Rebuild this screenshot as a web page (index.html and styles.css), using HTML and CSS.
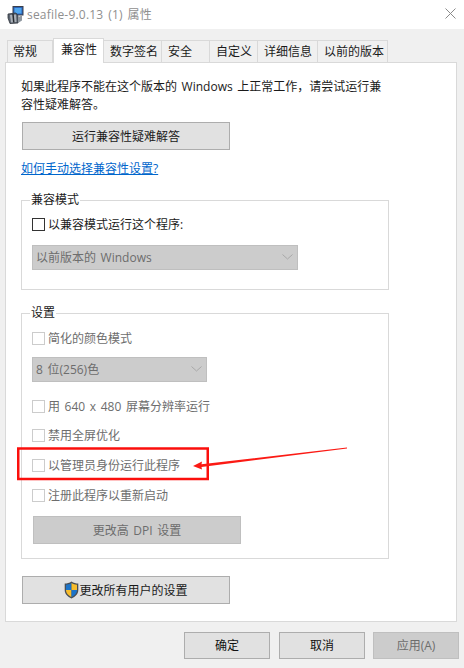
FILE: index.html
```html
<!DOCTYPE html>
<html lang="zh-CN">
<head>
<meta charset="utf-8">
<title>seafile-9.0.13 (1) 属性</title>
<link rel="stylesheet" href="styles.css">
</head>
<body>
<div class="page">
  <header class="titlebar">
    <svg class="app-icon" width="17" height="18" viewBox="0 0 17 18">
      <rect x="6" y="0.500" width="10" height="8.500" fill="#2b63b8" stroke="#3a3f4a"/>
      <rect x="7.500" y="2" width="7" height="5.500" fill="#4fa6ee"/>
      <path d="M1 8 L9 7 L11 10 L11 17 L3 17.500 L1 12 Z" fill="#5b6470" stroke="#2e333b" stroke-width="0.800"/>
      <path d="M3 9 L9 8.500 L9.500 16 L4 16.500 Z" fill="#a9b0b8"/>
      <path d="M6 8 L6.800 16.500" stroke="#262a30" stroke-width="1.500"/>
      <path d="M11 11 L15 9.500 L15 14.500 L11 17 Z" fill="#8f979f"/>
    </svg>
    <span class="title-text">seafile-9.0.13 (1) 属性</span>
    <svg class="close-icon" width="11" height="11" viewBox="0 0 11 11">
      <path d="M0.500 0.500 L10.500 10.500 M10.500 0.500 L0.500 10.500" stroke="#8a8a8a" stroke-width="1" fill="none"/>
    </svg>
  </header>

  <main class="dialog">
    <nav class="tabs">
      <div class="tab">常规</div>
      <div class="tab tab-active">兼容性</div>
      <div class="tab">数字签名</div>
      <div class="tab">安全</div>
      <div class="tab">自定义</div>
      <div class="tab">详细信息</div>
      <div class="tab">以前的版本</div>
    </nav>

    <section class="panel">
      <p class="intro">如果此程序不能在这个版本的 Windows 上正常工作，请尝试运行兼<br>容性疑难解答。</p>
      <div class="btn btn-wide btn-first">运行兼容性疑难解答</div>
      <a class="link" href="#">如何手动选择兼容性设置?</a>

      <fieldset class="group group-mode">
        <legend>兼容模式</legend>
        <div class="check-row"><span class="box box-on"></span><span>以兼容模式运行这个程序:</span></div>
        <div class="select select-long">
          <span>以前版本的 Windows</span>
          <svg width="11" height="6" viewBox="0 0 11 6"><path d="M0.500 0.500 L5.500 5 L10.500 0.500" fill="none" stroke="#a8a8a8"/></svg>
        </div>
      </fieldset>

      <fieldset class="group group-settings">
        <legend>设置</legend>
        <div class="check-row off"><span class="box"></span><span>简化的颜色模式</span></div>
        <div class="select select-short">
          <span>8 位(256)色</span>
          <svg width="11" height="6" viewBox="0 0 11 6"><path d="M0.500 0.500 L5.500 5 L10.500 0.500" fill="none" stroke="#a8a8a8"/></svg>
        </div>
        <div class="check-row off row-res"><span class="box"></span><span>用 640 x 480 屏幕分辨率运行</span></div>
        <div class="check-row off row-full"><span class="box"></span><span>禁用全屏优化</span></div>
        <div class="check-row off row-next"><span class="box"></span><span>以管理员身份运行此程序</span></div>
        <div class="check-row off row-next"><span class="box"></span><span>注册此程序以重新启动</span></div>
        <div class="btn btn-wide btn-off btn-dpi">更改高 DPI 设置</div>
      </fieldset>

      <div class="btn btn-wide btn-all">
        <svg class="shield" width="15" height="18" viewBox="0 0 15 18">
          <path d="M7.500 0.500 C5.500 2 3 2.500 0.700 2.500 L0.700 9 C0.700 13 3.500 15.500 7.500 17.500 C11.500 15.500 14.300 13 14.300 9 L14.300 2.500 C12 2.500 9.500 2 7.500 0.500 Z" fill="#4a4f55"/>
          <path d="M7.500 2 C5.800 3 4 3.600 2 3.700 L2 9 L7.500 9 Z" fill="#1c74c9"/>
          <path d="M7.500 2 C9.200 3 11 3.600 13 3.700 L13 9 L7.500 9 Z" fill="#f8bd2c"/>
          <path d="M2 9 L7.500 9 L7.500 16 C4.500 14.500 2 12.500 2 9 Z" fill="#f8bd2c"/>
          <path d="M13 9 L7.500 9 L7.500 16 C10.500 14.500 13 12.500 13 9 Z" fill="#1c74c9"/>
        </svg>
        <span>更改所有用户的设置</span>
      </div>
    </section>

    <footer class="actions">
      <div class="btn btn-action btn-ok">确定</div>
      <div class="btn btn-action">取消</div>
      <div class="btn btn-action btn-off">应用(A)</div>
    </footer>
  </main>

  <svg class="markup" width="464" height="668" viewBox="0 0 464 668">
    <rect x="18.250" y="448.500" width="189.500" height="30.500" fill="none" stroke="#fb0f0c" stroke-width="2.500"/>
    <path d="M347 447.400 L347 448.600 L201.500 467 L202 469.500 L193 466 L202 461.500 L201.500 464.300 Z" fill="#fb1a14"/>
  </svg>
</div>
</body>
</html>
```

FILE: styles.css
```css
* {
  box-sizing: border-box;
}

html,
body {
  margin: 0;
  padding: 0;
}

body {
  font-family: "Open Sans", "Noto Sans CJK SC", sans-serif;
  font-size: 12px;
  word-spacing: 1.5px;
  color: #1a1a1a;
  background: #f0f0f0;
}

.page {
  position: relative;
  width: 464px;
  height: 668px;
  overflow: hidden;
}

.titlebar {
  height: 29px;
  background: #fff;
  display: flex;
  align-items: center;
  padding: 0 8px 0 7px;
}

.app-icon {
  flex: none;
}

.title-text {
  margin-left: 3px;
  color: #8f8f8f;
  font-size: 12px;
  letter-spacing: 0.2px;
  line-height: 28px;
}

.close-icon {
  margin-left: auto;
  margin-bottom: 3px;
}

.dialog {
  height: 639px;
  padding-left: 5px;
}

.tabs {
  display: grid;
  grid-template-columns: 46px 51px 58px 48px 48px 60px 70px;
  align-items: end;
  height: 33px;
  padding: 0 0 0 2px;
}

.tab {
  height: 22px;
  border: 1px solid #d9d9d9;
  border-bottom: 0;
  border-left-width: 0;
  padding-left: 6px;
  line-height: 22px;
  white-space: nowrap;
  color: #1a1a1a;
}

.tab:first-child {
  border-left-width: 1px;
  padding-left: 5px;
}

.tab-active {
  position: relative;
  z-index: 1;
  height: 25px;
  margin-bottom: -1px;
  background: #fff;
  border-left-width: 1px;
  padding-left: 7px;
  line-height: 22px;
}

.panel {
  width: 452px;
  height: 560px;
  background: #fff;
  border: 1px solid #d9d9d9;
  padding: 15px 15px 0;
}

.intro {
  margin: 0;
  line-height: 18px;
  white-space: nowrap;
}

.btn {
  display: flex;
  align-items: center;
  justify-content: center;
  padding-bottom: 1px;
  background: #e1e1e1;
  border: 1px solid #adadad;
  white-space: nowrap;
}

.btn-wide {
  width: 208px;
  height: 28px;
}

.btn-first {
  margin-left: 1px;
  margin-top: 8px;
}

.link {
  display: block;
  margin-top: 11px;
  line-height: 16px;
  color: #0066cc;
  text-decoration: underline;
}

.group {
  margin: 15px 0 0;
  width: 368px;
  border: 1px solid #d9d9d9;
  padding: 0 10px;
  min-width: 0;
}

.group legend {
  padding: 0 1px;
  margin-left: -2px;
  line-height: 16px;
  font-size: 12px;
}

.group-mode {
  height: 98px;
  padding-top: 10px;
}

.group-settings {
  height: 254px;
  padding-top: 11px;
}

.check-row {
  display: flex;
  align-items: center;
  gap: 3px;
  height: 13px;
  line-height: 13px;
  white-space: nowrap;
}

.check-row.off {
  color: #6d6d6d;
}

.box {
  flex: none;
  width: 13px;
  height: 13px;
  background: #fff;
  border: 1px solid #cccccc;
}

.box-on {
  border-color: #333;
}

.select {
  display: flex;
  align-items: center;
  justify-content: space-between;
  height: 25px;
  padding: 0 3px 1px 3px;
  background: #cccccc;
  border: 1px solid #bfbfbf;
  color: #6d6d6d;
  white-space: nowrap;
}

.select svg {
  margin-right: 1px;
}

.select-long {
  width: 266px;
  margin-top: 14px;
}

.select-short {
  width: 175px;
  margin-top: 12px;
}

.row-res {
  margin-top: 18px;
}

.row-full {
  margin-top: 16px;
}

.row-next {
  margin-top: 17px;
}

.btn-off {
  background: #cccccc;
  border-color: #bfbfbf;
  color: #6d6d6d;
}

.btn-dpi {
  margin-left: 1px;
  margin-top: 14px;
}

.btn-all {
  margin-left: 1px;
  margin-top: 17px;
}

.shield {
  flex: none;
}

.actions {
  display: flex;
  justify-content: flex-end;
  gap: 8px;
  width: 454px;
  margin-top: 10px;
}

.btn-action {
  width: 86px;
  height: 27px;
  color: #111;
}

.btn-ok {
  margin-right: 1px;
}

.btn-action.btn-off {
  color: #6d6d6d;
}

.markup {
  position: absolute;
  left: 0;
  top: 0;
  pointer-events: none;
}
```
